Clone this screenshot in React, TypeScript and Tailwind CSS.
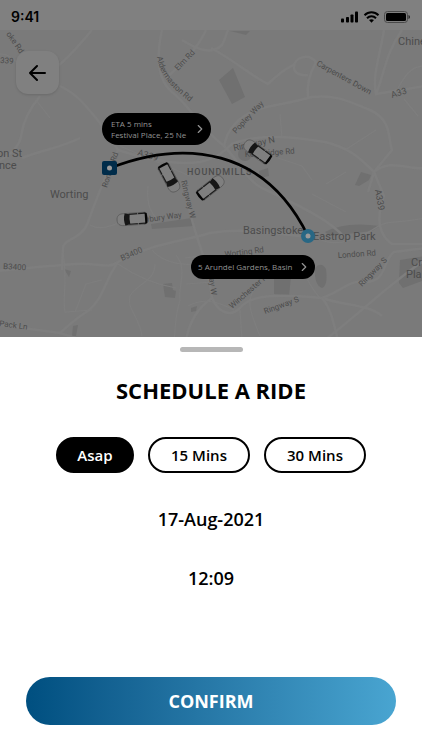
import { useState } from 'react';
import { ChevronRight } from 'lucide-react';
import { clsx } from 'clsx';

const delays = ['Asap', '15 Mins', '30 Mins'];

const mainRoads = [
  'M-5 271 C20 269 45 266 75 264 C95 262 108 270 118 262 C150 244 180 242 210 233 C240 228 262 232 300 236',
  'M118 262 C105 280 104 298 88 311 C76 318 68 326 60 333',
  'M-5 324 L30 329 L60 333 L82 340',
  'M60 86 C78 95 84 104 96 118 C106 130 112 142 118 150 C105 176 96 200 88 222 C82 240 64 238 63 248 L62 270',
  'M92 30 C82 42 70 56 58 66 M40 96 C32 106 24 118 22 132 C20 148 8 158 -5 162 M22 158 C42 150 60 148 80 138',
  'M162 30 C155 62 160 82 172 92 C190 106 200 128 224 146 C240 162 246 180 262 188 C300 206 330 220 345 238',
  'M206 30 C198 48 180 66 166 78 M182 40 C198 50 212 55 222 45 C226 38 226 34 228 30',
  'M118 150 C155 162 180 165 200 162 C218 158 225 150 232 144 C260 132 300 138 325 142 C350 148 360 158 374 172 C390 158 408 170 425 168',
  'M224 146 C228 125 242 114 262 108 C282 104 302 100 312 97 C336 94 350 102 370 110 C392 120 388 138 392 150 L374 172 L368 192',
  'M374 172 L384 196 C375 220 380 236 392 244 L425 244',
  'M384 30 C380 55 372 76 376 94 L425 86 M402 30 C386 52 384 75 376 94',
  'M308 97 C306 78 314 66 316 62 C308 52 294 58 294 67 C294 74 302 76 308 75',
  'M211 48 C240 64 254 78 268 84 C284 68 292 66 295 64',
  'M184 180 C186 205 194 226 198 240 C205 260 210 280 212 298 C218 312 230 318 240 308 C250 294 280 294 322 298 C340 292 350 280 362 282 C388 284 382 260 394 252 L425 248',
  'M322 298 C345 306 368 304 382 316 M425 260 C392 282 370 304 340 328 L325 340',
  'M322 298 C332 310 334 326 338 340 M212 298 C198 308 190 320 186 340',
];

const lanes = [
  'M176 255 C188 270 178 284 180 300 C174 320 176 328 174 340',
  'M155 264 C155 282 136 284 130 296 C126 308 140 318 142 336',
  'M63 252 C68 282 62 300 65 312 L92 310 M75 312 L86 284 L102 280',
  'M118 264 C134 275 152 284 176 288 M152 250 C160 260 178 266 194 264',
  'M148 186 C146 206 152 214 158 220 M90 225 C102 232 118 224 136 214',
  'M186 284 L212 282 M188 306 C206 296 222 304 234 310',
  'M256 288 C244 300 252 316 260 336 M296 258 C306 276 310 288 320 298',
  'M318 238 C330 246 350 244 372 230 C388 218 400 224 425 218',
  'M278 158 L302 166 L312 180 M282 138 L280 114',
  'M326 184 L346 172 M345 150 L376 130 M312 194 L346 212',
  'M398 88 C408 70 414 66 425 66 M404 99 L418 116',
  'M0 54 C14 54 20 68 28 74 M36 100 L50 118 M120 146 L190 176',
  'M185 258 C220 252 230 260 254 278 M240 310 L242 340',
];

const roadLabels = [
  { text: 'oke Rd', x: 6, y: 34, angle: 55, size: 8 },
  { text: '339', x: 0, y: 63, angle: 3, size: 8 },
  { text: 'Elm Rd', x: 178, y: 71, angle: -46, size: 8 },
  { text: 'Carpenters Down', x: 316, y: 65, angle: 29, size: 8 },
  { text: 'A33', x: 392, y: 98, angle: -17, size: 9 },
  { text: 'Popley Way', x: 236, y: 134, angle: -47, size: 8 },
  { text: 'Ringway N', x: 234, y: 151, angle: -12, size: 9 },
  { text: 'Kembridge Rd', x: 245, y: 157, angle: -4, size: 8 },
  { text: 'Roman Rd', x: 107, y: 188, angle: -72, size: 8 },
  { text: 'A339', x: 137, y: 155, angle: 17, size: 9 },
  { text: 'Ringway W', x: 181, y: 181, angle: 76, size: 8 },
  { text: 'A339', x: 375, y: 190, angle: 80, size: 9 },
  { text: 'Newbury Way', x: 134, y: 224, angle: -8, size: 8 },
  { text: 'B3400', x: 122, y: 261, angle: -24, size: 8 },
  { text: 'B3400', x: 3, y: 269, angle: 3, size: 8 },
  { text: 'Pack Ln', x: -1, y: 326, angle: 7, size: 8 },
  { text: 'Worting Rd', x: 225, y: 257, angle: -7, size: 8 },
  { text: 'London Rd', x: 338, y: 258, angle: -4, size: 8 },
  { text: 'Ringway S', x: 362, y: 287, angle: -46, size: 8 },
  { text: 'Winchester Rd', x: 232, y: 309, angle: -41, size: 8 },
  { text: 'Ringway S', x: 265, y: 314, angle: -20, size: 8 },
  { text: 'Ringway W', x: 206, y: 257, angle: 82, size: 8 },
];

const placeLabels = [
  { text: 'Chine', x: 398, y: 45 },
  { text: 'on St', x: -3, y: 157 },
  { text: 'nce', x: -1, y: 169 },
  { text: 'Worting', x: 50, y: 198 },
  { text: 'Basingstoke', x: 243, y: 234 },
  { text: 'Eastrop Park', x: 313, y: 240 },
  { text: 'Cr', x: 411, y: 266 },
  { text: 'Pla', x: 406, y: 278 },
];

const cars = [
  { x: 133, y: 219, angle: 176 },
  { x: 169, y: 177, angle: 62 },
  { x: 210, y: 188, angle: -38 },
  { x: 258, y: 152, angle: 216 },
];

function Car({ x, y, angle }: { x: number; y: number; angle: number }) {
  return (
    <g transform={`translate(${x} ${y}) rotate(${angle})`}>
      <path d="M-12 -6 H9 C14 -6 16 -4 16 0 S14 6 9 6 H-12 Q-14 6 -14 3 V-3 Q-14 -6 -12 -6Z" fill="#7f7f7f" stroke="#555" strokeWidth=".7" />
      <path d="M3 -5 L8 -6 Q10 0 8 6 L3 5 Q4 0 3 -5Z" fill="#161616" />
      <path d="M-11 -6 L-14 -5 Q-15 0 -14 5 L-11 6 L-12 4 V-4Z" fill="#050505" />
      <path d="M-12 -5 H4 M-12 5 H4" stroke="#1c1c1c" strokeWidth="1.2" />
      <path d="M-5 -6 V-4 M-5 6 V4" stroke="#888" strokeWidth=".7" />
    </g>
  );
}

function StreetMap() {
  return (
    <svg viewBox="0 30 422 307" preserveAspectRatio="xMidYMid slice" className="block h-[307px] w-full bg-[#7a7a7a]" role="img" aria-label="Map of the route">
      <g fill="#707070">
        <path d="M219 80 L233 68 L245 97 L232 104Z" />
        <path d="M355 185 L361 172 L371 175 L369 180 L359 186Z" />
        <path d="M151 224 L192 218 L194 226 L152 229Z" />
        <path d="M259 171 L268 168 L269 176 L260 178Z" />
        <circle cx="245" cy="154" r="7" />
        <path d="M163 284 L172 283 L173 290 L176 291 L175 298 L165 297Z" />
        <path d="M64 269 L71 271 L69 277Z M191 308 L197 306 L196 311 L191 312Z M73 326 L78 325 L76 336 L72 336Z" />
        <path d="M400 260 L425 256 V280 L403 288 L399 283Z" />
        <path d="M315 268 Q321 261 326 269 Q328 286 322 288 Q314 285 315 268Z" />
        <path d="M274 276 H291 L289 296 L274 294Z" />
        <path d="M325 232 Q345 221 380 226 L372 231 L330 236Z M230 31 L250 31 L246 35Z" />
      </g>
      <g fill="none" stroke="#7e7e7e">
        {mainRoads.map((d) => <path key={d} d={d} strokeWidth="2.5" />)}
        {lanes.map((d) => <path key={d} d={d} strokeWidth="1.2" />)}
      </g>

      <g fill="#4c4c4c" fontFamily="Roboto, sans-serif">
        <path id="aldermaston" d="M157 57 C160 77 174 90 194 105" fill="none" />
        <text fontSize="8"><textPath href="#aldermaston">Aldermaston Rd</textPath></text>
        {roadLabels.map((l, i) => (
          <text key={i} fontSize={l.size} transform={`translate(${l.x} ${l.y}) rotate(${l.angle})`}>{l.text}</text>
        ))}
        {placeLabels.map((l) => (
          <text key={l.text} x={l.x} y={l.y} fontSize="11">{l.text}</text>
        ))}
        <text x="187" y="175" fontSize="9" fontWeight="500" className="tracking-widest">HOUNDMILLS</text>
      </g>

      {cars.map((car) => <Car key={car.x} {...car} />)}

      {/* Route */}
      <path d="M110 168 C185 139 265 148 308 236" fill="none" stroke="#000" strokeWidth="2.8" />
      <rect x="102" y="161" width="15" height="14" rx="2" fill="#002c4a" />
      <circle cx="109.500" cy="168" r="2.500" fill="#999" />
      <circle cx="308" cy="236" r="7" fill="#286784" />
      <circle cx="308" cy="236" r="2.500" fill="#999" />
    </svg>
  );
}

function StatusBar() {
  return (
    <header className="flex h-[30px] items-center justify-between bg-[#808080] pt-1 pr-3 pl-[11px]">
      <span className="font-['Inter',sans-serif] text-sm font-semibold">9:41</span>
      <svg width="70" height="14" viewBox="0 0 70 14" role="img" aria-label="Signal, Wi-Fi and battery">
        <g>
          <rect x="1" y="8.500" width="3" height="4" rx=".8" />
          <rect x="6" y="7" width="3" height="5.500" rx=".8" />
          <rect x="10.500" y="4.500" width="3" height="8" rx=".8" />
          <rect x="15" y="1.500" width="3" height="11" rx=".8" />
        </g>
        <g fill="none" stroke="#000" strokeWidth="2">
          <path d="M24.500 5.200 C28.500 1.200 34.500 1.200 38.500 5.200" />
          <path d="M27 8.200 C29.500 5.700 33.500 5.700 36 8.200" />
        </g>
        <path d="M29 10 Q31.500 8.300 34 10 L31.500 12.700Z" />
        <rect x="44.500" y="1.500" width="23" height="11" rx="3" fill="none" stroke="#4a4a4a" />
        <rect x="46" y="3" width="20" height="8" rx="1.500" />
        <path d="M68.500 5 Q70 5.500 70 7 T68.500 9Z" fill="#222" />
      </svg>
    </header>
  );
}

export default function App() {
  const [delay, setDelay] = useState('Asap');

  return (
    <main className="flex min-h-screen flex-col bg-white font-['Open_Sans','Noto_Sans',sans-serif] text-black">
      <StatusBar />

      <section className="relative">
        <StreetMap />
        <button aria-label="Back" className="absolute top-[21px] left-4 flex size-[43px] items-center justify-center rounded-xl bg-[#808080] shadow">
          <svg width="18" height="18" viewBox="0 0 18 18" fill="none" stroke="currentColor" strokeWidth="2" strokeLinecap="round" strokeLinejoin="round">
            <path d="M16 9H1M8 2L1 9l7 7" />
          </svg>
        </button>
        <button className="absolute top-[83px] left-[102px] flex h-8 w-[109px] items-center justify-between rounded-full bg-black pr-1 pl-[9px] text-left text-[8px] leading-[11px] text-[#939393]">
          <span>ETA 5 mins<br />Festival Place, 25 Ne</span>
          <ChevronRight className="size-3.5 shrink-0" />
        </button>
        <button className="absolute top-[225px] left-[191px] flex h-6 w-[124px] items-center justify-between rounded-full bg-black pr-1 pl-[7px] text-[8px] text-[#939393]">
          <span>5 Arundel Gardens, Basin</span>
          <ChevronRight className="size-3.5 shrink-0" />
        </button>
      </section>

      <section className="flex flex-1 flex-col items-center px-[26px] pt-2.5 pb-[25px]">
        <div className="h-[5px] w-[63px] rounded-full bg-[#b7b7b7]" />
        <h1 className="mt-[22px] text-[22px] leading-8 font-bold">SCHEDULE A RIDE</h1>
        <div className="mt-[31px] flex gap-3.5">
          {delays.map((item) => (
            <button
              key={item}
              aria-pressed={delay === item}
              onClick={() => setDelay(item)}
              className={clsx(
                'h-9 rounded-full border-2 border-black text-[15px] font-semibold',
                item === 'Asap' ? 'w-[78px]' : 'w-[102px]',
                delay === item && 'bg-black text-white'
              )}
            >
              {item}
            </button>
          ))}
        </div>
        <time dateTime="2021-08-17" className="mt-8 text-lg leading-7 font-semibold">17-Aug-2021</time>
        <time dateTime="12:09" className="mt-[31px] text-lg leading-7 font-semibold">12:09</time>
        <button className="mt-auto h-12 w-full rounded-full bg-linear-to-r from-[#004f80] to-[#49a5d1] text-lg font-bold text-white">
          CONFIRM
        </button>
      </section>
    </main>
  );
}
